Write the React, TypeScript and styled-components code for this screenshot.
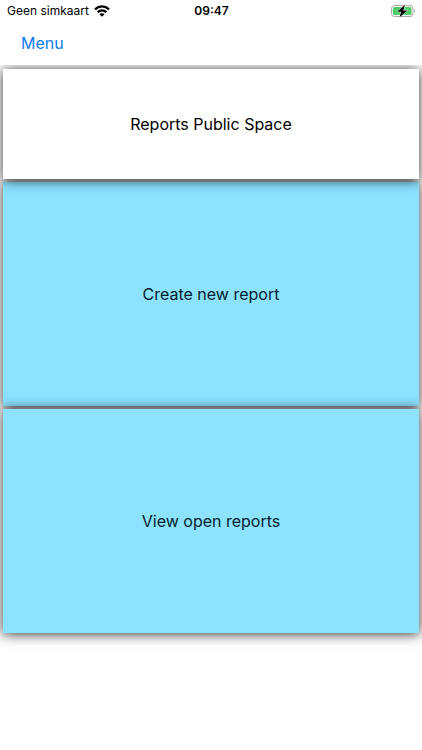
import React from "react";
import styled, { createGlobalStyle } from "styled-components";

const GlobalStyle = createGlobalStyle`
  * { box-sizing: border-box; }
  body {
    margin: 0;
    background: #fff;
    color: #000;
    font-family: Inter, "Liberation Sans", sans-serif;
  }
`;

const Screen = styled.div`
  min-height: 100vh;
  display: flex;
  flex-direction: column;
`;

const StatusBar = styled.header`
  display: grid;
  grid-template-columns: 1fr auto 1fr;
  align-items: center;
  height: 22px;
  padding: 0 6px 0 7px;
  font-size: 12px;
  line-height: 20px;
`;

const Carrier = styled.span`
  display: flex;
  align-items: center;
  gap: 5px;
  white-space: nowrap;
`;

const Clock = styled.time`
  font-size: 12px;
  font-weight: 600;
`;

const BatteryIcon = styled.svg`
  justify-self: end;
`;

const NavBar = styled.nav`
  display: flex;
  align-items: center;
  height: 43px;
  padding: 0 21px 2px;
`;

const MenuButton = styled.button`
  padding: 0;
  border: 0;
  background: none;
  color: #087cf0;
  font: inherit;
  font-size: 16px;
  line-height: 24px;
  cursor: pointer;
`;

const Cards = styled.main`
  flex: 1;
  display: flex;
  flex-direction: column;
  gap: 3px;
  padding: 4px 3px;
  overflow: hidden;
`;

const cardShadow = "0 1px 12px rgba(0, 0, 0, 0.8)";

const TitleCard = styled.h1`
  position: relative;
  z-index: 1;
  display: flex;
  align-items: center;
  justify-content: center;
  height: 110px;
  margin: 0;
  background: #fff;
  box-shadow: ${cardShadow};
  font-size: 16px;
  font-weight: 400;
`;

const ActionCard = styled.button`
  position: relative;
  height: 224px;
  padding: 0;
  border: 0;
  background: #8ce2ff;
  box-shadow: ${cardShadow};
  color: #041f29;
  font: inherit;
  font-size: 16px;
  cursor: pointer;
`;

const Wifi = () => (
  <svg width="16" height="12" viewBox="0 0 16 12" role="img" aria-label="Wi-Fi">
    <g fill="none" stroke="#000" strokeWidth="2.3">
      <path d="M1 4.3C5 .5 11 .5 15 4.3" />
      <path d="M3.6 7.200C6.2 4.900 9.8 4.900 12.4 7.200" />
    </g>
    <path d="M5.5 9.2C7 8 9 8 10.500 9.2L8 11.700Z" />
  </svg>
);

const Battery = () => (
  <BatteryIcon width="25" height="14" viewBox="0 0 25 14" role="img" aria-label="Battery charging">
    <rect x=".5" y="1.500" width="21.500" height="11" rx="3" fill="#fff" stroke="#a6a6a6" />
    <rect x="2" y="3" width="18.500" height="8" rx="1.500" fill="#4fce68" />
    <path d="M23.300 5.300v3.500c1.300-.5 1.300-3 0-3.500Z" fill="#999" />
    <path d="M14 .8 6 7.700h4.200L8.300 13.400l8.200-7h-4.300Z" fill="#000" stroke="#fff" strokeWidth="1" paintOrder="stroke" />
  </BatteryIcon>
);

export default function App() {
  return (
    <Screen>
      <GlobalStyle />
      <StatusBar>
        <Carrier>
          Geen simkaart
          <Wifi />
        </Carrier>
        <Clock>09:47</Clock>
        <Battery />
      </StatusBar>
      <NavBar>
        <MenuButton type="button">Menu</MenuButton>
      </NavBar>
      <Cards>
        <TitleCard>Reports Public Space</TitleCard>
        <ActionCard type="button">Create new report</ActionCard>
        <ActionCard type="button">View open reports</ActionCard>
      </Cards>
    </Screen>
  );
}
